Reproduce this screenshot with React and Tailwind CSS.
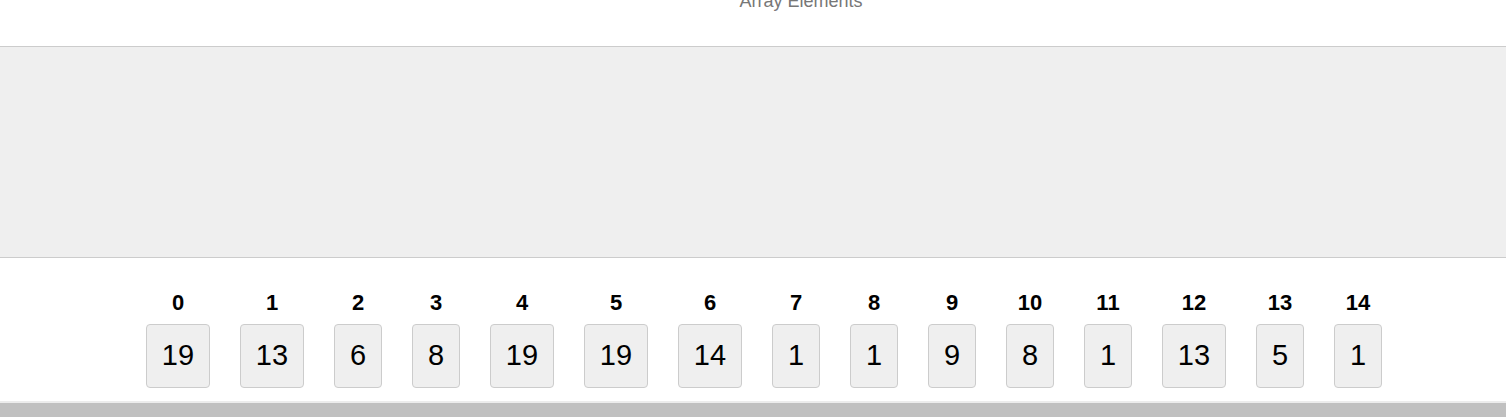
import React from "react";

const values = [19, 13, 6, 8, 19, 19, 14, 1, 1, 9, 8, 1, 13, 5, 1];

export default function App() {
  return (
    <div
      className="w-[1506px] h-[417px] overflow-hidden bg-white flex flex-col"
      style={{ fontFamily: '"Liberation Sans", Arial, sans-serif' }}
    >
      <div className="h-[46px] flex justify-center pl-[96px] overflow-hidden">
        <div className="-mt-[9px] text-[18px] leading-[21px] text-[#777]">Array Elements</div>
      </div>
      <div className="h-[212px] bg-[#efefef] border-y border-[#cccccc]" />
      <div className="flex-1 flex gap-[30px] pl-[146px] pt-[34px]">
        {values.map((v, i) => (
          <div key={i} className="flex flex-col items-center">
            <div className="h-[22px] text-[22px] leading-[22px] font-bold text-black">{i}</div>
            <div
              className={`mt-[10px] h-[64px] ${String(v).length > 1 ? "w-[64px]" : "w-[48px]"} flex items-center justify-center rounded-[4px] border border-[#cccccc] bg-[#efefef] text-[29px] text-black`}
            >
              {v}
            </div>
          </div>
        ))}
      </div>
      <div className="h-[2px] bg-[#ececec]" />
      <div className="h-[14px] bg-[#c0c0c0]" />
    </div>
  );
}
